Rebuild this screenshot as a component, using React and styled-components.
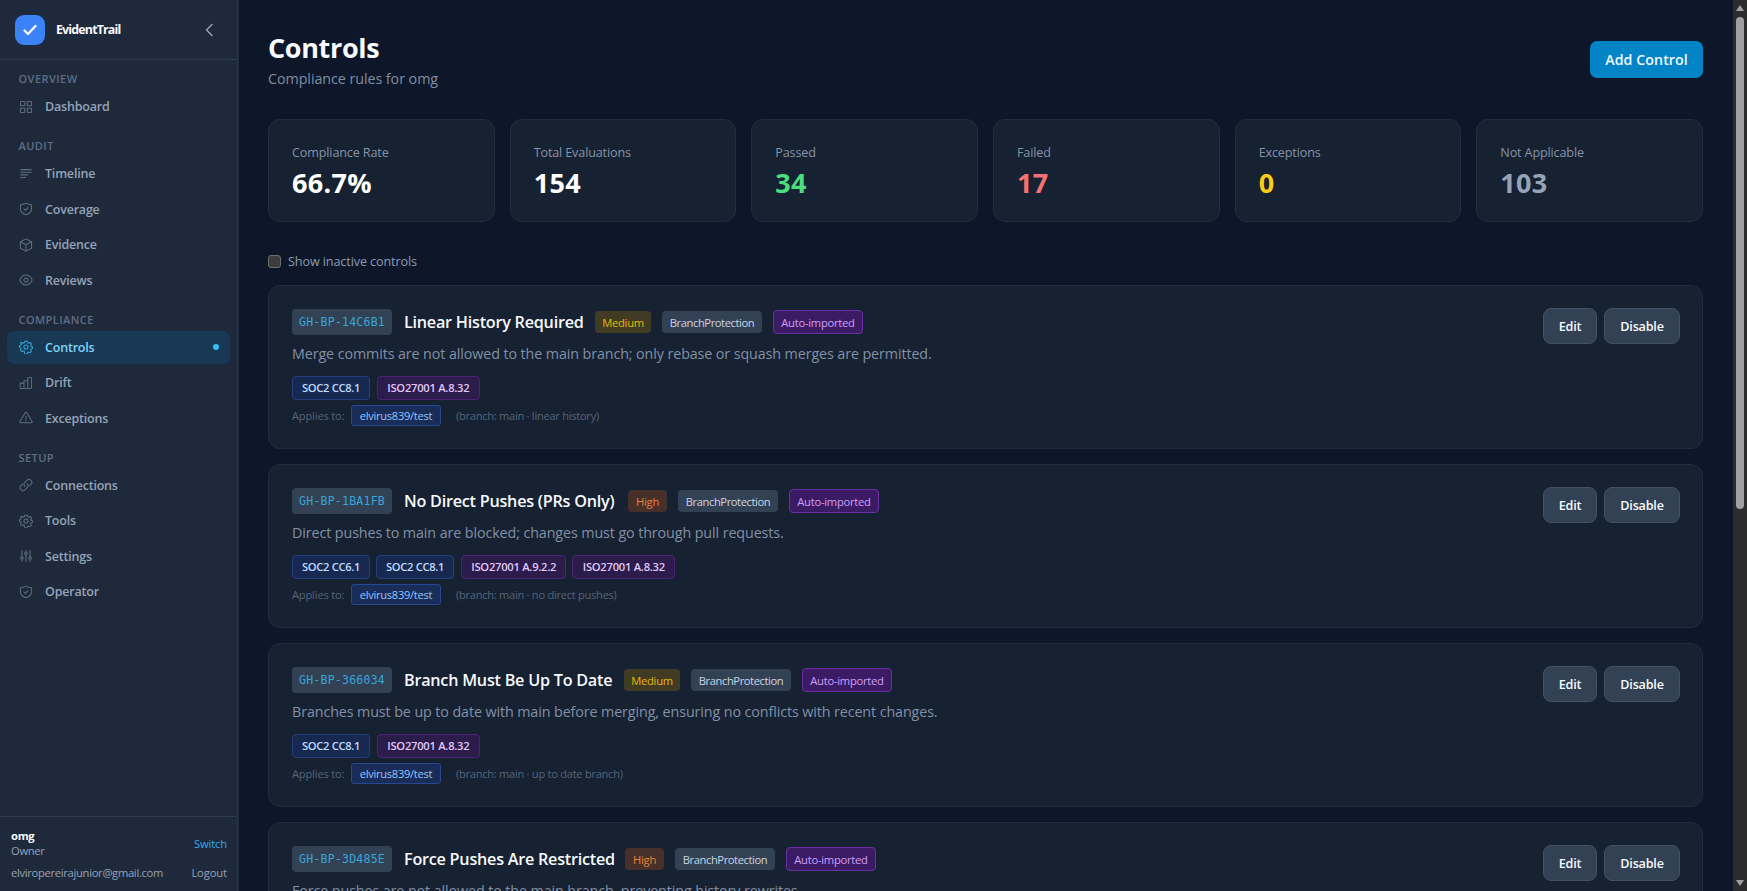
import React from "react"
import styled, { createGlobalStyle, css } from "styled-components"

const GlobalStyle = createGlobalStyle`
    * {
        box-sizing: border-box;
    }
    body {
        margin: 0;
        background: #0e1729;
        font-family: "Open Sans", "Noto Sans", sans-serif;
        overflow: hidden;
    }
    h1, h3, p {
        margin: 0;
    }
    button {
        font-family: inherit;
        cursor: pointer;
    }
`

const Wrapper = styled.div`
    display: flex;
    height: 100vh;
    overflow: hidden;
    color: #f8fafc;
`

const Sidebar = styled.aside`
    display: flex;
    flex-direction: column;
    flex: none;
    width: 239px;
    background: #1e293b;
    border-right: 3px solid #232f42;
`

const Brand = styled.div`
    display: flex;
    align-items: center;
    height: 60px;
    padding: 0 22px 0 15px;
    border-bottom: 1px solid #303d50;
`

const Logo = styled.div`
    display: flex;
    align-items: center;
    justify-content: center;
    width: 30px;
    height: 30px;
    border-radius: 9px;
    background: #3b82f6;
`

const BrandName = styled.span`
    flex: 1;
    margin-left: 11px;
    font-size: 12.4px;
    line-height: 18px;
    padding-top: 1px;
    font-weight: 700;
    letter-spacing: -0.82px;
`

const Nav = styled.nav`
    flex: 1;
    padding: 8px 6px 0 7px;
`

const Group = styled.div`
    margin-bottom: 11.9px;
`

const GroupTitle = styled.div`
    height: 22px;
    padding: 0 11.5px;
    font-size: 11px;
    line-height: 22px;
    font-weight: 600;
    letter-spacing: 0.45px;
    color: #5f6e85;
`

const NavItem = styled.a`
    display: flex;
    align-items: center;
    height: 33.4px;
    margin-bottom: 2px;
    padding: 0 11px 0 12px;
    border-radius: 7px;
    font-size: 12.5px;
    font-weight: 600;
    letter-spacing: -0.2px;
    color: #94a3b8;

    svg {
        margin-right: 12px;
        color: #5d6c82;
    }

    ${(props) => props.$active && css`
        background: #183853;
        color: #7dd3fc;

        svg {
            color: #32a5d8;
        }
    `}
`

const Dot = styled.span`
    width: 6px;
    height: 6px;
    margin-left: auto;
    border-radius: 50%;
    background: #38bdf8;
`

const Account = styled.div`
    height: 75px;
    padding: 11px 9px 0 11px;
    border-top: 1px solid #303d50;
    font-size: 11.2px;
    letter-spacing: -0.3px;
    color: #94a3b8;
`

const AccountRow = styled.div`
    display: flex;
    align-items: center;
    justify-content: space-between;
    line-height: 15px;
    margin-bottom: 7px;
`

const OrgName = styled.div`
    font-weight: 700;
    color: #f8fafc;
`

const Switch = styled.a`
    color: #38a9e4;
    letter-spacing: -0.15px;
`

const Logout = styled.a`
    letter-spacing: -0.1px;
`

const Main = styled.main`
    flex: 1;
    height: 100vh;
    padding: 30px 30px 0 29px;
    overflow: hidden;
`

const Header = styled.header`
    display: flex;
    align-items: flex-start;
    justify-content: space-between;
    height: 60px;
    margin-bottom: 29px;
`

const Title = styled.h1`
    font-size: 27px;
    line-height: 35px;
    font-weight: 700;
    letter-spacing: -0.35px;
`

const Subtitle = styled.p`
    font-size: 14.3px;
    line-height: 28px;
    letter-spacing: -0.06px;
    color: #7f8da3;
`

const AddButton = styled.button`
    width: 113px;
    height: 37px;
    margin-top: 11px;
    padding: 0;
    border: none;
    border-radius: 7px;
    background: #0284c7;
    color: #f0f9ff;
    font-size: 14.2px;
    font-weight: 600;
    letter-spacing: 0.08px;
`

const Stats = styled.section`
    display: grid;
    grid-template-columns: repeat(6, 1fr);
    gap: 15px;
    margin-bottom: 29px;
`

const StatCard = styled.div`
    height: 103px;
    padding: 24px 23px;
    border: 1px solid #212e40;
    border-radius: 12px;
    background: #162132;
`

const StatLabel = styled.div`
    font-size: 12.6px;
    line-height: 18px;
    letter-spacing: -0.14px;
    color: #8593a8;
`

const StatValue = styled.div`
    font-size: 27px;
    line-height: 42px;
    font-weight: 700;
    letter-spacing: 0.3px;
    color: ${(props) => props.$color || "#ffffff"};
`

const Filter = styled.label`
    display: flex;
    align-items: center;
    height: 21px;
    margin-bottom: 13px;
    font-size: 12.6px;
    letter-spacing: -0.1px;
    color: #8c9ab0;
`

const Checkbox = styled.span`
    width: 13px;
    height: 13px;
    margin-right: 7px;
    border: 1px solid #6d6d6d;
    border-radius: 3px;
    background: #3b3b3b;
`

const ControlCard = styled.article`
    display: flex;
    justify-content: space-between;
    height: 164px;
    margin-bottom: 15px;
    padding: 23px 22px 22px 23px;
    border: 1px solid #202d3f;
    border-radius: 12px;
    background: #162132;
`

const TitleRow = styled.div`
    display: flex;
    align-items: center;
    height: 26px;
    white-space: nowrap;
`

const Code = styled.code`
    width: 100px;
    height: 26px;
    margin-right: 12px;
    border-radius: 4px;
    background: #334155;
    color: #38a6d8;
    font-family: "DejaVu Sans Mono", "Liberation Mono", monospace;
    font-size: 11.5px;
    line-height: 26px;
    letter-spacing: 0.24px;
    text-align: center;
`

const ControlName = styled.h3`
    width: ${(props) => props.$width}px;
    margin-right: 12px;
    font-size: 16.2px;
    font-weight: 600;
    letter-spacing: -0.24px;
`

const badgeColors = {
    Medium: "background: #423b24; color: #e5b80b; width: 56px;",
    High: "background: #472f2a; color: #e8833a; width: 39px;",
    plain: "background: #334155; color: #cbd5e1; width: 100px; letter-spacing: -0.42px;",
    auto: "background: #3b1b63; color: #cf9ff8; width: 90px; border: 1px solid #6b2fa5; height: 24px;",
}

const Badge = styled.span`
    display: flex;
    align-items: center;
    justify-content: center;
    height: 22px;
    margin-right: 11px;
    border-radius: 4px;
    font-size: 11.2px;
    font-weight: 500;
    letter-spacing: -0.25px;
    ${(props) => badgeColors[props.$kind]}
`

const Description = styled.p`
    height: 41px;
    font-size: 14.3px;
    line-height: 37px;
    letter-spacing: -0.1px;
    white-space: nowrap;
    color: #8290a6;
`

const Tags = styled.div`
    display: flex;
    gap: 6px;
    height: 24px;
`

const Tag = styled.span`
    display: flex;
    align-items: center;
    justify-content: center;
    width: 78px;
    border: 1px solid #243e7e;
    border-radius: 4px;
    background: #182951;
    color: #bfdbfe;
    font-size: 11.2px;
    font-weight: 600;
    line-height: 21px;
    padding-bottom: 1px;
    letter-spacing: -0.32px;
    white-space: nowrap;
`

const IsoTag = styled(Tag)`
    width: auto;
    padding: 0 9.3px 1px;
    border-color: #4a2377;
    background: #2c1c4b;
    color: #e0c8f8;
    letter-spacing: -0.26px;

    ${Tag} + & {
        margin-left: 1px;
    }
    & + & {
        margin-left: 0;
    }
`

const Scope = styled.div`
    display: flex;
    align-items: center;
    height: 21px;
    margin-top: 5px;
    font-size: 11.1px;
    letter-spacing: -0.27px;
    color: #55647b;
`

const Applies = styled.span`
    width: 53px;
    letter-spacing: -0.16px;
    white-space: nowrap;
`

const Repo = styled.span`
    width: 90px;
    height: 21px;
    margin: 0 15px 0 6px;
    border: 1px solid #264892;
    border-radius: 3px;
    background: #1a2c58;
    color: #93c5fd;
    font-weight: 500;
    line-height: 19px;
    text-align: center;
`

const Actions = styled.div`
    display: flex;
    gap: 7px;
    margin-top: -1px;
`

const ActionButton = styled.button`
    width: ${(props) => props.$wide ? 76 : 54}px;
    height: 36px;
    padding: 0;
    border: 1px solid #435165;
    border-radius: 8px;
    background: #334155;
    color: #f8fafc;
    font-size: 12.6px;
    font-weight: 600;
    letter-spacing: -0.2px;
`

const Scrollbar = styled.div`
    display: flex;
    flex: none;
    flex-direction: column;
    align-items: center;
    width: 14px;
    height: 100vh;
    padding: 5px 0;
    background: #2c2c2c;
`

const Thumb = styled.div`
    width: 8px;
    height: 492px;
    margin: 6px 0 auto;
    border-radius: 4px;
    background: #9f9f9f;
`

const icons = {
    grid: <><rect x="2.500" y="2.500" width="7.500" height="7.500" rx="1" /><rect x="14" y="2.500" width="7.500" height="7.500" rx="1" /><rect x="2.500" y="14" width="7.500" height="7.500" rx="1" /><rect x="14" y="14" width="7.500" height="7.500" rx="1" /></>,
    lines: <path d="M3 4.500h18M3 9h18M3 13.500h12M3 18h8" />,
    shield: <><path d="M12 2c3 2 6 2.600 9.500 2.700v6.800c0 5-4 8.500-9.500 10.500-5.500-2-9.500-5.500-9.500-10.500V4.700C6 4.600 9 4 12 2z" /><path d="m8.500 12 2.500 2.500 4.500-5" /></>,
    box: <><path d="m12 1.500 9.500 5v11L12 22.500l-9.500-5v-11z" /><path d="m2.500 6.500 9.500 5 9.500-5M12 11.500v11" /></>,
    eye: <><path d="M1.500 12C4 6 7.500 3.500 12 3.500S20 6 22.500 12C20 18 16.500 20.500 12 20.500S4 18 1.500 12z" /><circle cx="12" cy="12" r="3.500" /></>,
    cog: <><path d="M9.800 2h4.400l.8 2.800 1.500.7 2.600-1.300 2.300 2.600-1.400 2.400.6 1.500 2.400 1v3l-2.400.8-.7 1.600 1.300 2.500-2.500 2.400-2.400-1.400-1.500.7-.8 2.700H9.800L9 19.300l-1.500-.7-2.600 1.400-2.400-2.500 1.400-2.400-.7-1.600-2.300-.8v-3l2.400-.9.600-1.600-1.300-2.500L5 4.200l2.500 1.300 1.500-.7z" /><circle cx="12" cy="12" r="3.500" /></>,
    bars: <path d="M2 13.500c0-.8.500-1.300 1.300-1.300H8.500v9.300H3.300c-.8 0-1.300-.5-1.300-1.300zM8.500 9.300c0-.8.500-1.300 1.300-1.300H15v13.500H8.500zM15 4c0-1 .5-1.500 1.500-1.500h3.500c1 0 1.500.5 1.500 1.500v16c0 1-.5 1.500-1.500 1.500h-5z" />,
    warning: <><path d="M10.700 3 1.500 18c-.6 1 .1 2 1.200 2h18.600c1.100 0 1.800-1 1.200-2L13.300 3c-.6-1-2-1-2.600 0z" /><path d="M12 8.500v5M12 16.500v.5" /></>,
    link: <><path d="m10 14.500a5 5 0 0 1 0-7l3.500-3.500a4.900 4.900 0 0 1 7 7l-2.500 2.500" /><path d="M14 9.500a5 5 0 0 1 0 7l-3.500 3.500a4.900 4.900 0 0 1-7-7L6 10.500" /></>,
    sliders: <><path d="M5 2.500v11M5 18v3.500M12 2.500v3M12 10v11.500M19 2.500v11M19 18v3.500" /><circle cx="5" cy="15.500" r="2.200" /><circle cx="12" cy="7.500" r="2.200" /><circle cx="19" cy="15.500" r="2.200" /></>,
}

const navigation = [
    { title: "OVERVIEW", items: [["Dashboard", "grid"]] },
    { title: "AUDIT", items: [["Timeline", "lines"], ["Coverage", "shield"], ["Evidence", "box"], ["Reviews", "eye"]] },
    { title: "COMPLIANCE", items: [["Controls", "cog"], ["Drift", "bars"], ["Exceptions", "warning"]] },
    { title: "SETUP", items: [["Connections", "link"], ["Tools", "cog"], ["Settings", "sliders"], ["Operator", "shield"]] },
]

const stats = [
    ["Compliance Rate", "66.7%"],
    ["Total Evaluations", "154"],
    ["Passed", "34", "#4ade80"],
    ["Failed", "17", "#f87171"],
    ["Exceptions", "0", "#facc15"],
    ["Not Applicable", "103", "#94a3b8"],
]

const controls = [
    {
        code: "GH-BP-14C6B1",
        name: "Linear History Required",
        width: 179,
        severity: "Medium",
        description: "Merge commits are not allowed to the main branch; only rebase or squash merges are permitted.",
        tags: ["SOC2 CC8.1", "ISO27001 A.8.32"],
        scope: "(branch: main · linear history)",
    },
    {
        code: "GH-BP-1BA1FB",
        name: "No Direct Pushes (PRs Only)",
        width: 212,
        severity: "High",
        description: "Direct pushes to main are blocked; changes must go through pull requests.",
        tags: ["SOC2 CC6.1", "SOC2 CC8.1", "ISO27001 A.9.2.2", "ISO27001 A.8.32"],
        scope: "(branch: main · no direct pushes)",
    },
    {
        code: "GH-BP-366034",
        name: "Branch Must Be Up To Date",
        width: 208,
        severity: "Medium",
        description: "Branches must be up to date with main before merging, ensuring no conflicts with recent changes.",
        tags: ["SOC2 CC8.1", "ISO27001 A.8.32"],
        scope: "(branch: main · up to date branch)",
    },
    {
        code: "GH-BP-3D485E",
        name: "Force Pushes Are Restricted",
        width: 209,
        severity: "High",
        description: "Force pushes are not allowed to the main branch, preventing history rewrites.",
        tags: [],
    },
]

function Icon({ name }) {
    return (
        <svg width="14" height="14" viewBox="0 0 24 24" fill="none" stroke="currentColor" strokeWidth="1.800" strokeLinecap="round" strokeLinejoin="round">
            {icons[name]}
        </svg>
    )
}

function Control({ control }) {
    return (
        <ControlCard>
            <div>
                <TitleRow>
                    <Code>{control.code}</Code>
                    <ControlName $width={control.width}>{control.name}</ControlName>
                    <Badge $kind={control.severity}>{control.severity}</Badge>
                    <Badge $kind="plain">BranchProtection</Badge>
                    <Badge $kind="auto">Auto-imported</Badge>
                </TitleRow>
                <Description>{control.description}</Description>
                <Tags>
                    {control.tags.map((tag) => tag.startsWith("ISO") ? <IsoTag key={tag}>{tag}</IsoTag> : <Tag key={tag}>{tag}</Tag>)}
                </Tags>
                {control.scope && (
                    <Scope>
                        <Applies>Applies to:</Applies>
                        <Repo>elvirus839/test</Repo>
                        {control.scope}
                    </Scope>
                )}
            </div>
            <Actions>
                <ActionButton>Edit</ActionButton>
                <ActionButton $wide>Disable</ActionButton>
            </Actions>
        </ControlCard>
    )
}

function App() {
    return (
        <Wrapper>
            <GlobalStyle />
            <Sidebar>
                <Brand>
                    <Logo>
                        <svg width="14" height="12" viewBox="0 0 14 12" fill="none" stroke="#fff" strokeWidth="2.300" strokeLinecap="round" strokeLinejoin="round">
                            <path d="m1.500 6.500 3.500 3.500L12.500 2" />
                        </svg>
                    </Logo>
                    <BrandName>EvidentTrail</BrandName>
                    <svg width="9" height="14" viewBox="0 0 9 14" fill="none" stroke="#94a3b8" strokeWidth="1.500" strokeLinecap="round" strokeLinejoin="round">
                        <path d="M7 1.500 1.500 7 7 12.500" />
                    </svg>
                </Brand>
                <Nav>
                    {navigation.map((group) => (
                        <Group key={group.title}>
                            <GroupTitle>{group.title}</GroupTitle>
                            {group.items.map(([label, icon]) => (
                                <NavItem key={label} $active={label === "Controls"}>
                                    <Icon name={icon} />
                                    {label}
                                    {label === "Controls" && <Dot />}
                                </NavItem>
                            ))}
                        </Group>
                    ))}
                </Nav>
                <Account>
                    <AccountRow>
                        <div>
                            <OrgName>omg</OrgName>
                            Owner
                        </div>
                        <Switch>Switch</Switch>
                    </AccountRow>
                    <AccountRow>
                        <span>elviropereirajunior@gmail.com</span>
                        <Logout>Logout</Logout>
                    </AccountRow>
                </Account>
            </Sidebar>
            <Main>
                <Header>
                    <div>
                        <Title>Controls</Title>
                        <Subtitle>Compliance rules for omg</Subtitle>
                    </div>
                    <AddButton>Add Control</AddButton>
                </Header>
                <Stats>
                    {stats.map(([label, value, color]) => (
                        <StatCard key={label}>
                            <StatLabel>{label}</StatLabel>
                            <StatValue $color={color}>{value}</StatValue>
                        </StatCard>
                    ))}
                </Stats>
                <Filter>
                    <Checkbox />
                    Show inactive controls
                </Filter>
                {controls.map((control) => <Control key={control.code} control={control} />)}
            </Main>
            <Scrollbar>
                <svg width="8" height="6" viewBox="0 0 8 6"><path d="M4 0 8 6H0z" fill="#9f9f9f" /></svg>
                <Thumb />
                <svg width="8" height="6" viewBox="0 0 8 6"><path d="M4 6 8 0H0z" fill="#9f9f9f" /></svg>
            </Scrollbar>
        </Wrapper>
    )
}

export default App
